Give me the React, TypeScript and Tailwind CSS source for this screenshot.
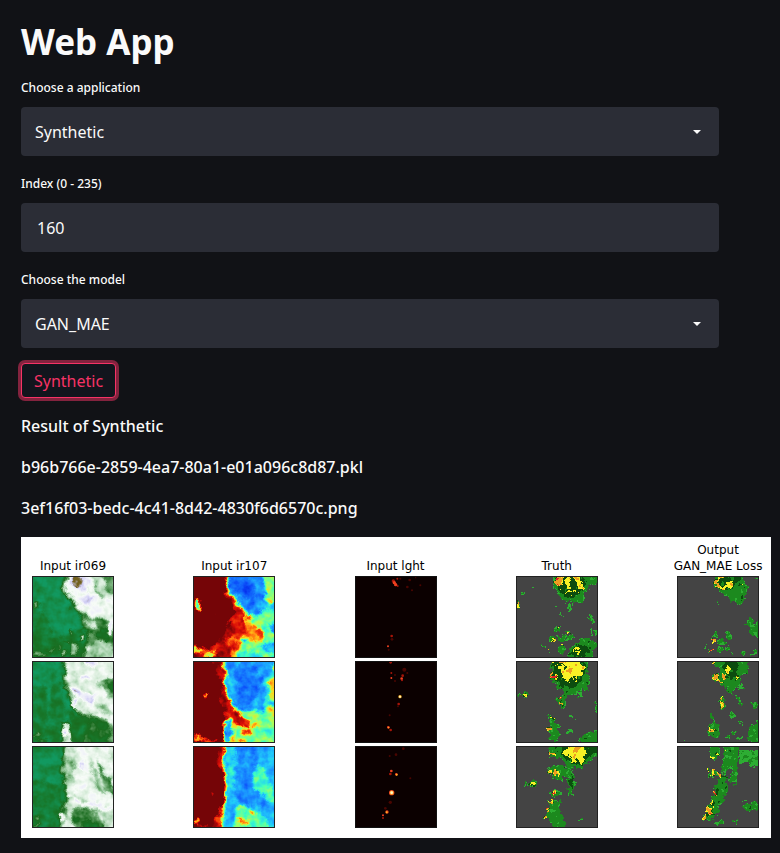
import { useState } from "react";

type Shape = [value: number, points: string];
type Dot = [value: number, x: number, y: number, rx: number, ry: number];
type Palette = "vapor" | "jet" | "radar";

interface Field {
  base: number;
  shapes: Shape[];
  dots?: Dot[];
}

interface PaletteSpec {
  type: "table" | "discrete";
  r: string;
  g: string;
  b: string;
  frequency: number;
  octaves: number;
  amount: number;
  blur: number;
  rough: number;
}

const PALETTES: Record<Palette, PaletteSpec> = {
  vapor: {
    type: "table",
    r: ".07 .08 .09 .10 .35 .62 .85 .97 .93 .80 .45",
    g: ".60 .54 .47 .42 .60 .80 .93 .99 .93 .79 .38",
    b: ".38 .28 .17 .12 .36 .64 .86 .97 .98 .95 .12",
    frequency: 0.035,
    octaves: 3,
    amount: 0.34,
    blur: 3,
    rough: 24,
  },
  jet: {
    type: "table",
    r: "0 .05 .10 .13 .25 .68 1 1 .85 .46 .46",
    g: ".1 .32 .55 .80 1 1 .85 .35 .05 .02 .02",
    b: ".9 .98 1 .98 .75 .35 .1 .05 .03 .03 .03",
    frequency: 0.04,
    octaves: 3,
    amount: 0.26,
    blur: 3,
    rough: 26,
  },
  radar: {
    type: "discrete",
    r: ".27 .27 .18 .11 .05 .97 .93 .88",
    g: ".27 .27 .68 .54 .30 .95 .62 .12",
    b: ".27 .27 .20 .12 .06 .15 .13 .16",
    frequency: 0.07,
    octaves: 2,
    amount: 0.28,
    blur: 1.5,
    rough: 24,
  },
};

const VAPOR: Field[] = [
  {
    base: 0.06,
    shapes: [
      [0.17, "-20,60 40,120 70,190 150,150 165,190 160,266 -20,266"],
      [0.22, "-20,205 60,200 120,190 160,215 160,266 -20,266"],
      [0.38, "100,-20 92,30 105,62 130,90 146,120 152,150 168,180 150,266 266,266 266,-20"],
      [0.68, "113,-20 102,25 104,48 122,72 140,94 154,112 185,128 225,122 245,150 266,140 266,62 205,62 184,30 176,-20"],
      [0.58, "176,-20 185,20 205,55 266,90 266,30 215,22 205,-20"],
      [0.42, "215,15 266,40 266,70 230,50"],
      [0.55, "155,125 185,175 200,165 178,128"],
      [0.5, "120,205 132,200 138,225 130,240 118,232"],
      [0.52, "160,215 200,190 240,205 266,266 150,266 165,240"],
      [0.28, "165,160 205,195 266,205 266,180 205,150"],
      [0.84, "140,68 165,52 188,66 175,90 150,84"],
      [0.84, "112,6 150,-10 172,14 160,50 140,42 118,34"],
      [1, "118,14 132,4 150,6 154,28 140,30 134,42 118,36"],
    ],
    dots: [[0.42, 17, 88, 8, 12], [0.65, 118, 167, 4, 5], [0.65, 107, 198, 5, 4], [0.68, 148, 187, 5, 9], [0.75, 94, 229, 5, 4], [0.6, 80, 219, 4, 3], [0.5, 20, 235, 22, 5], [0.4, 55, 226, 16, 4], [1, 157, 34, 6, 4], [0.8, 236, 160, 8, 22], [0.4, 115, 95, 4, 3], [0.4, 143, 104, 3, 3]],
  },
  {
    base: 0.06,
    shapes: [
      [0.18, "-20,60 40,80 60,266 -20,266"],
      [0.15, "60,-20 95,120 110,266 50,266"],
      [0.4, "90,-20 98,40 94,80 112,110 120,145 135,160 150,200 150,266 266,266 266,-20"],
      [0.64, "102,-20 104,50 110,75 122,100 128,130 148,160 190,156 215,175 266,200 266,-20"],
      [0.2, "108,150 130,165 165,170 185,205 170,266 120,266 115,190"],
      [0.28, "165,172 215,178 245,215 200,266 150,266"],
      [0.45, "190,70 225,45 266,60 266,120 225,110 215,80"],
      [0.34, "220,55 255,48 266,80 235,92"],
      [0.52, "170,110 210,135 266,150 266,170 205,150"],
      [0.63, "94,185 104,175 118,210 120,250 92,250"],
      [0.84, "118,75 150,92 190,106 180,130 150,112 120,92"],
      [0.86, "145,-20 200,-20 185,16 160,12"],
    ],
    dots: [[0.88, 128, 132, 8, 14], [1, 128, 118, 3, 3], [1, 166, 4, 5, 7], [0.86, 98, 213, 10, 12], [1, 98, 217, 7, 5], [0.86, 160, 52, 15, 4], [0.45, 10, 225, 12, 4], [0.45, 35, 238, 20, 4]],
  },
  {
    base: 0.07,
    shapes: [
      [0.16, "-20,90 50,110 98,120 85,266 -20,266"],
      [0.4, "90,-20 96,30 86,70 94,110 98,150 85,195 84,266 266,266 266,-20"],
      [0.58, "100,-20 104,50 100,90 104,150 96,210 98,266 266,266 266,-20"],
      [0.66, "130,-20 130,150 266,195 266,110 235,60 225,-20"],
      [0.46, "108,40 125,60 118,100 103,85"],
      [0.38, "190,30 205,50 246,130 250,160 215,120"],
      [0.48, "170,45 205,95 225,150 195,125"],
      [0.35, "120,200 150,185 195,200 215,230 215,266 130,266"],
      [0.28, "145,232 175,215 200,266 140,266"],
      [0.8, "110,146 145,165 210,175 245,190 210,190 145,176"],
    ],
    dots: [[0.88, 150, 57, 8, 6], [0.88, 108, 150, 8, 4], [0.7, 86, 214, 7, 14], [0.9, 88, 215, 4, 7], [0.35, 10, 215, 8, 7], [0.5, 14, 237, 14, 4]],
  },
];

const THERMAL: Field[] = [
  {
    base: 1,
    shapes: [
      [0.84, "96,-20 92,45 118,90 120,120 98,150 80,190 50,212 -20,210 -20,266 266,266 266,-20"],
      [0.66, "103,-20 98,45 126,75 145,105 155,160 120,175 100,200 120,266 266,266 266,-20"],
      [0.8, "124,80 148,90 160,170 130,190 112,160"],
      [0.45, "108,-20 103,45 150,95 155,130 185,150 215,190 190,200 160,180 140,215 130,266 266,266 266,-20"],
      [0.2, "111,-20 107,45 150,88 170,120 195,118 212,90 220,50 200,-20"],
      [0.13, "116,-20 112,40 150,66 180,82 190,40 160,-20"],
      [0.26, "190,80 225,100 266,110 266,70 215,70"],
      [0.5, "215,-20 222,50 234,70 236,-20"],
      [0.33, "140,235 175,225 205,235 190,266 140,266"],
      [0.25, "210,205 266,195 266,235 225,235"],
      [0.22, "228,145 266,130 266,175 234,175"],
    ],
    dots: [[0.4, 17, 90, 8, 18], [0.74, 168, 124, 9, 7], [0.76, 204, 170, 10, 16], [0.66, 170, 182, 25, 12], [0.3, 150, 190, 9, 8], [0.5, 15, 220, 20, 7], [0.5, 50, 235, 22, 8], [0.8, 120, 210, 18, 14], [0.6, 230, 75, 8, 12], [0.8, 30, 228, 8, 4], [0.8, 70, 225, 8, 5]],
  },
  {
    base: 1,
    shapes: [
      [0.85, "50,-20 62,40 88,60 72,110 98,150 80,215 90,266 266,266 266,-20"],
      [0.58, "92,-20 95,90 120,145 96,190 92,266 266,266 266,-20"],
      [0.24, "97,-20 99,85 122,135 145,155 200,165 225,140 245,60 240,-20"],
      [0.16, "155,-20 180,20 205,50 190,110 145,150 125,120 140,90 120,40"],
      [0.34, "210,60 238,30 266,30 266,150 220,135"],
      [0.58, "226,65 240,50 252,60 250,120 232,120"],
      [0.45, "145,150 230,150 266,180 266,266 130,266 130,200"],
      [0.8, "105,145 130,150 170,180 165,205 130,190 104,170"],
      [0.25, "94,185 105,178 122,205 115,232 92,240"],
    ],
    dots: [[0.5, 38, 106, 5, 10], [0.74, 160, 215, 14, 9], [0.68, 185, 195, 14, 9], [0.68, 150, 240, 14, 6], [0.65, 18, 230, 22, 6], [0.72, 52, 240, 24, 6], [0.4, 235, 220, 15, 12], [0.12, 95, 217, 6, 8]],
  },
  {
    base: 1,
    shapes: [
      [0.84, "78,-20 65,50 85,75 92,100 92,145 78,195 58,230 60,266 266,266 266,-20"],
      [0.5, "93,-20 88,70 100,120 92,170 84,205 84,266 266,266 266,-20"],
      [0.26, "98,-20 94,65 104,120 98,170 92,210 95,266 266,266 266,-20"],
      [0.2, "130,-20 128,170 225,180 200,130 180,50 190,-20"],
      [0.34, "102,-20 126,-20 124,120 108,150 104,70"],
      [0.4, "190,50 205,60 245,130 250,165 225,165 180,125"],
      [0.42, "125,205 160,180 190,190 225,225 215,266 125,266"],
    ],
    dots: [[0.64, 178, 200, 11, 9], [0.68, 150, 225, 16, 7], [0.5, 145, 187, 16, 6], [0.6, 60, 143, 4, 3], [0.8, 45, 163, 8, 4], [0.6, 8, 228, 8, 12], [0.75, 30, 242, 20, 4], [0.72, 75, 220, 8, 16]],
  },
];

const TRUTH: Field[] = [
  {
    base: 0,
    shapes: [
      [0.42, "112,-20 112,35 124,55 145,75 170,84 195,80 208,60 218,30 266,10 266,-20"],
      [0.56, "120,-20 120,30 135,50 165,66 200,50 210,20 205,-20"],
      [0.7, "146,4 166,6 160,20 168,38 155,36 148,22"],
      [0.72, "174,-8 190,2 198,18 204,38 188,38 180,24 170,10"],
      [0.8, "116,2 136,4 138,22 132,34 116,24"],
      [0.33, "155,84 170,84 168,112 158,112"],
      [0.44, "155,246 160,215 185,200 210,185 225,205 232,235 225,266"],
      [0.57, "165,225 185,208 212,206 220,228 200,244 168,240"],
      [0.7, "172,222 184,208 192,218 188,230 172,228"],
    ],
    dots: [[0.96, 126, 27, 5, 4], [0.9, 120, 12, 3, 6], [0.7, 165, 49, 13, 3], [0.38, 48, 39, 4, 3], [0.38, 20, 53, 4, 4], [0.75, 7, 87, 4, 9], [0.36, 224, 130, 10, 12], [0.36, 225, 166, 4, 11], [0.35, 243, 170, 3, 14], [0.38, 124, 160, 9, 7], [0.42, 108, 186, 10, 11], [0.42, 136, 190, 14, 9], [0.4, 137, 220, 12, 14], [0.38, 160, 184, 13, 6], [0.8, 110, 191, 4, 5], [0.8, 103, 223, 5, 4], [0.7, 137, 207, 3, 3], [0.7, 157, 170, 2, 4], [0.7, 127, 154, 4, 2], [0.38, 118, 90, 4, 3], [0.38, 135, 120, 5, 3], [0.38, 85, 210, 5, 5], [0.45, 232, 208, 10, 12]],
  },
  {
    base: 0,
    shapes: [
      [0.44, "104,-20 106,55 124,80 150,104 180,98 205,80 217,100 218,60 216,-20"],
      [0.56, "112,-20 112,50 140,80 175,80 206,45 206,-20"],
      [0.7, "146,-20 142,14 124,14 136,30 138,50 158,62 176,48 196,50 200,20 196,-20"],
      [0.79, "150,20 166,24 166,36 154,36"],
      [0.34, "184,110 192,85 202,108"],
      [0.44, "120,105 146,98 150,125 142,146 124,128"],
      [0.42, "102,180 120,182 134,210 122,246 98,235"],
      [0.42, "190,230 215,215 260,205 260,250 190,250"],
    ],
    dots: [[0.96, 114, 49, 7, 5], [0.78, 113, 4, 8, 4], [0.78, 136, 2, 8, 4], [0.82, 110, 34, 4, 5], [0.44, 28, 101, 9, 9], [0.71, 29, 102, 5, 5], [0.4, 10, 101, 5, 4], [0.9, 132, 110, 7, 5], [0.84, 136, 129, 4, 6], [0.4, 106, 175, 8, 9], [0.7, 107, 172, 5, 4], [0.86, 104, 206, 8, 7], [0.36, 165, 168, 9, 5], [0.36, 160, 213, 11, 6], [0.38, 242, 142, 7, 15], [0.4, 107, 235, 6, 7]],
  },
  {
    base: 0,
    shapes: [
      [0.43, "98,-20 100,28 140,42 155,70 170,62 196,70 214,52 260,24 260,-20"],
      [0.56, "128,-20 135,26 160,45 198,60 216,32 260,8 260,-20"],
      [0.7, "152,-20 152,10 134,22 160,28 168,55 184,36 200,55 206,30 206,-20"],
      [0.78, "170,-20 200,-20 186,22 172,18"],
      [0.42, "95,68 122,56 150,62 158,86 130,106 112,98"],
      [0.42, "155,65 172,70 178,130 158,158 154,110"],
      [0.55, "162,90 172,98 168,130 160,135"],
      [0.42, "98,160 136,165 132,195 144,210 142,250 108,250 100,220 85,225 80,210 98,190"],
    ],
    dots: [[0.84, 104, 22, 9, 5], [0.8, 112, 76, 12, 5], [0.78, 124, 83, 8, 6], [0.44, 50, 112, 13, 10], [0.7, 50, 114, 8, 4], [0.44, 28, 111, 7, 6], [0.42, 118, 142, 18, 10], [0.97, 116, 140, 8, 4], [0.84, 105, 167, 8, 5], [0.84, 95, 190, 5, 5], [0.84, 87, 214, 6, 7], [0.38, 190, 218, 8, 3], [0.38, 22, 170, 3, 2], [0.4, 135, 235, 15, 12]],
  },
];

const OUTPUT: Field[] = [
  {
    base: 0,
    shapes: [
      [0.43, "108,-20 112,30 130,50 155,68 190,88 206,66 210,30 190,-20"],
      [0.53, "120,-20 122,25 150,42 188,32 196,-20"],
      [0.72, "116,10 126,26 150,34 148,42 118,34"],
      [0.82, "113,5 122,10 130,28 122,32 113,24"],
      [0.71, "162,10 168,24 158,38 150,34"],
      [0.4, "200,145 212,138 220,118 232,150 246,125 260,190 222,180 222,152"],
    ],
    dots: [[0.8, 130, 4, 8, 4], [0.36, 240, 6, 8, 5], [0.38, 121, 80, 3, 3], [0.38, 196, 112, 3, 3], [0.4, 118, 174, 9, 10], [0.42, 132, 198, 14, 10], [0.4, 154, 178, 8, 12], [0.42, 128, 222, 12, 8], [0.38, 152, 218, 10, 7], [0.82, 110, 194, 5, 4], [0.84, 100, 222, 6, 4], [0.38, 200, 230, 8, 4], [0.38, 162, 232, 4, 4], [0.38, 230, 232, 10, 4], [0.38, 86, 216, 4, 3], [0.78, 194, 28, 4, 3]],
  },
  {
    base: 0,
    shapes: [
      [0.43, "104,-20 106,10 126,24 132,42 106,35 104,55 135,72 150,92 168,100 175,80 190,70 188,45 216,28 205,-20"],
      [0.54, "138,-20 142,30 160,55 182,55 188,-20"],
      [0.4, "170,98 188,108 200,125 188,135 175,115"],
      [0.42, "106,178 122,190 130,222 116,236 96,218 98,190"],
      [0.42, "210,218 226,190 260,170 260,255 215,240"],
    ],
    dots: [[0.8, 108, 4, 6, 6], [0.84, 113, 47, 8, 9], [0.82, 143, 49, 5, 9], [0.8, 128, 60, 10, 3], [0.72, 153, 28, 5, 11], [0.73, 178, 52, 3, 5], [0.38, 190, 80, 9, 7], [0.42, 134, 110, 9, 9], [0.76, 132, 110, 4, 4], [0.42, 137, 132, 10, 12], [0.8, 134, 132, 4, 6], [0.42, 232, 134, 11, 11], [0.36, 166, 162, 8, 7], [0.4, 106, 166, 6, 14], [0.84, 104, 206, 8, 7], [0.38, 152, 226, 7, 9], [0.38, 190, 188, 8, 4], [0.38, 188, 232, 6, 4], [0.38, 170, 215, 4, 8], [0.38, 22, 242, 3, 2]],
  },
  {
    base: 0,
    shapes: [
      [0.36, "190,10 260,12 260,60 225,62 208,52 185,55"],
      [0.4, "138,-20 140,30 132,48 140,90 150,75 165,62 172,132 180,88 180,60 188,-20"],
      [0.43, "96,-20 98,38 115,45 128,28 128,-20"],
      [0.45, "128,85 150,92 152,135 140,160 126,180 122,205 98,228 84,210 100,165 112,135"],
    ],
    dots: [[0.8, 104, 34, 5, 5], [0.72, 122, 26, 4, 5], [0.8, 150, 12, 5, 3], [0.43, 108, 82, 14, 10], [0.76, 108, 80, 7, 9], [0.84, 125, 87, 6, 6], [0.72, 95, 72, 4, 3], [0.97, 112, 140, 5, 5], [0.73, 108, 172, 5, 10], [0.84, 95, 195, 8, 8], [0.84, 83, 216, 5, 6], [0.38, 125, 232, 13, 9], [0.42, 222, 184, 26, 10], [0.46, 232, 176, 10, 10], [0.38, 175, 228, 6, 8], [0.38, 198, 166, 6, 4], [0.38, 62, 142, 3, 2], [0.45, 165, 98, 8, 10]],
  },
];

const HOT = ["#4a0500", "#a51408", "#f04020", "#ffb020", "#fff6c8"];

/* [heat 0-4, x, y, radius] */
const LIGHTNING: [number, number, number, number][][] = [
  [[1, 115, 15, 5], [2, 118, 20, 5], [2, 122, 26, 5], [1, 128, 30, 3], [1, 127, 8, 3], [0, 136, 8, 3], [0, 164, 12, 4], [0, 157, 33, 4], [0, 196, 28, 3], [0, 171, 43, 3], [0, 182, 5, 2], [1, 110, 180, 4], [0, 111, 190, 4], [2, 99, 211, 3], [0, 101, 221, 3]],
  [[1, 107, 4, 4], [1, 109, 36, 3], [2, 109, 51, 3], [0, 120, 42, 3], [1, 143, 44, 4], [2, 140, 53, 4], [1, 141, 58, 3], [0, 148, 26, 6], [0, 157, 36, 3], [0, 120, 60, 3], [3, 135, 107, 5], [4, 135, 107, 3], [1, 131, 129, 4], [0, 129, 136, 3], [0, 104, 163, 3], [2, 100, 199, 4], [3, 101, 200, 2], [1, 107, 207, 4]],
  [[0, 145, 8, 4], [0, 123, 26, 4], [0, 104, 30, 3], [2, 109, 75, 4], [1, 106, 84, 4], [2, 124, 85, 4], [3, 125, 86, 3], [0, 166, 97, 3], [2, 110, 140, 8], [3, 110, 140, 6], [4, 110, 140, 4], [0, 106, 169, 5], [0, 91, 187, 4], [2, 96, 198, 5], [3, 95, 199, 3], [2, 84, 208, 3], [1, 84, 216, 3]],
];

function gray(value: number) {
  const level = Math.round(value * 255);
  return `rgb(${level},${level},${level})`;
}

function FieldTile({ palette, field, seed, label }: { palette: Palette; field: Field; seed: number; label: string }) {
  const id = `${palette}-${seed}`;
  const map = PALETTES[palette];
  return (
    <svg viewBox="0 0 246 246" role="img" aria-label={label} className="block size-[82px] overflow-hidden">
      <filter id={id} filterUnits="userSpaceOnUse" x="-20" y="-20" width="286" height="286" colorInterpolationFilters="sRGB">
        <feTurbulence type="fractalNoise" baseFrequency={map.frequency} numOctaves={map.octaves} seed={seed} result="noise" />
        <feColorMatrix in="noise" type="matrix" values="1 0 0 0 0 1 0 0 0 0 1 0 0 0 0 0 0 0 0 1" result="grain" />
        <feGaussianBlur in="SourceGraphic" stdDeviation={map.blur} result="soft" />
        <feDisplacementMap in="soft" in2="noise" scale={map.rough} xChannelSelector="G" yChannelSelector="B" result="rough" />
        <feComposite in="rough" in2="grain" operator="arithmetic" k1={0} k2={1} k3={map.amount} k4={-map.amount / 2} />
        <feColorMatrix type="matrix" values="1 0 0 0 0 0 1 0 0 0 0 0 1 0 0 0 0 0 0 1" />
        <feComponentTransfer>
          <feFuncR type={map.type} tableValues={map.r} />
          <feFuncG type={map.type} tableValues={map.g} />
          <feFuncB type={map.type} tableValues={map.b} />
        </feComponentTransfer>
      </filter>
      <g filter={`url(#${id})`}>
        <rect x="-20" y="-20" width="286" height="286" fill={gray(field.base)} />
        {field.shapes.map(([value, points], i) => (
          <polygon key={i} points={points} fill={gray(value)} />
        ))}
        {field.dots?.map(([value, x, y, rx, ry], i) => (
          <ellipse key={i} cx={x} cy={y} rx={rx} ry={ry} fill={gray(value)} />
        ))}
      </g>
      <rect x="1.5" y="1.5" width="243" height="243" fill="none" stroke="#222" strokeWidth="3" />
    </svg>
  );
}

function LightningTile({ row, label }: { row: number; label: string }) {
  return (
    <svg viewBox="0 0 246 246" role="img" aria-label={label} className="block size-[82px]">
      <rect width="246" height="246" fill="#0b0000" />
      {LIGHTNING[row].map(([heat, x, y, r], i) => (
        <circle key={i} cx={x} cy={y} r={r} fill={HOT[heat]} />
      ))}
      <rect x="1.5" y="1.5" width="243" height="243" fill="none" stroke="#111" strokeWidth="3" />
    </svg>
  );
}

const ROWS = [0, 1, 2];

function Column({ title, children }: { title: string[]; children: React.ReactNode }) {
  return (
    <div className="flex w-[82px] flex-col items-center">
      <h2 className="mb-0.5 whitespace-nowrap text-center font-['DejaVu_Sans',sans-serif] text-[12px] leading-4 text-black">
        {title.map((line) => (
          <span key={line} className="block">
            {line}
          </span>
        ))}
      </h2>
      <div className="flex flex-col gap-[3px]">{children}</div>
    </div>
  );
}

function SelectField({ id, label, options }: { id: string; label: string; options: string[] }) {
  return (
    <div className="flex flex-col gap-[9px]">
      <label htmlFor={id} className="text-[12px] font-medium leading-5">
        {label}
      </label>
      <div className="relative">
        <select
          id={id}
          defaultValue={options[0]}
          className="h-[49px] w-full appearance-none rounded-[4px] bg-[#2b2d36] pl-[14px] pr-10 text-[16px] leading-6 outline-none"
        >
          {options.map((option) => (
            <option key={option}>{option}</option>
          ))}
        </select>
        <svg viewBox="0 0 8 4" className="pointer-events-none absolute right-[18px] top-[23px] h-1 w-2" aria-hidden="true">
          <path d="M0 0h8L4 4z" fill="#fafafa" />
        </svg>
      </div>
    </div>
  );
}

export default function App() {
  const [index, setIndex] = useState("160");
  return (
    <main className="min-h-screen bg-[#111216] pb-[15px] pl-[21px] pr-[9px] pt-[18px] font-['Noto_Sans',sans-serif] text-[16px] leading-[26px] text-[#fafafa]">
      <div className="mr-[52px]">
        <h1 className="mb-3 text-[35px] font-bold leading-[48px]">Web App</h1>
        <form className="flex flex-col gap-[18px]" onSubmit={(e) => e.preventDefault()}>
          <SelectField id="application" label="Choose a application" options={["Synthetic"]} />
          <div className="flex flex-col gap-[9px]">
            <label htmlFor="index" className="text-[12px] font-medium leading-5">
              Index (0 - 235)
            </label>
            <input
              id="index"
              type="text"
              inputMode="numeric"
              value={index}
              onChange={(e) => setIndex(e.target.value)}
              className="h-[49px] w-full rounded-[4px] bg-[#2b2d36] px-4 text-[16px] leading-6 outline-none"
            />
          </div>
          <SelectField id="model" label="Choose the model" options={["GAN_MAE"]} />
          <button
            type="submit"
            className="-mt-[3px] h-[35px] self-start rounded-[4px] border border-[#f63366] bg-[#12151d] px-3 text-[16px] leading-6 text-[#f63366] shadow-[0_0_0_3px_rgba(246,51,102,0.5)]"
          >
            Synthetic
          </button>
        </form>
        <div className="mb-4 mt-[15px] flex flex-col gap-[15px] font-medium">
          <p>Result of Synthetic</p>
          <p>b96b766e-2859-4ea7-80a1-e01a096c8d87.pkl</p>
          <p>3ef16f03-bedc-4c41-8d42-4830f6d6570c.png</p>
        </div>
      </div>
      <figure className="flex items-end justify-between bg-white pb-[10px] pl-[11px] pr-3 pt-[5px]">
        <Column title={["Input ir069"]}>
          {ROWS.map((r) => (
            <FieldTile key={r} palette="vapor" field={VAPOR[r]} seed={r + 3} label={`Input ir069, sample ${r + 1}`} />
          ))}
        </Column>
        <Column title={["Input ir107"]}>
          {ROWS.map((r) => (
            <FieldTile key={r} palette="jet" field={THERMAL[r]} seed={r + 11} label={`Input ir107, sample ${r + 1}`} />
          ))}
        </Column>
        <Column title={["Input lght"]}>
          {ROWS.map((r) => (
            <LightningTile key={r} row={r} label={`Input lght, sample ${r + 1}`} />
          ))}
        </Column>
        <Column title={["Truth"]}>
          {ROWS.map((r) => (
            <FieldTile key={r} palette="radar" field={TRUTH[r]} seed={r + 21} label={`Truth, sample ${r + 1}`} />
          ))}
        </Column>
        <Column title={["Output", "GAN_MAE Loss"]}>
          {ROWS.map((r) => (
            <FieldTile key={r} palette="radar" field={OUTPUT[r]} seed={r + 31} label={`Output, sample ${r + 1}`} />
          ))}
        </Column>
      </figure>
    </main>
  );
}
